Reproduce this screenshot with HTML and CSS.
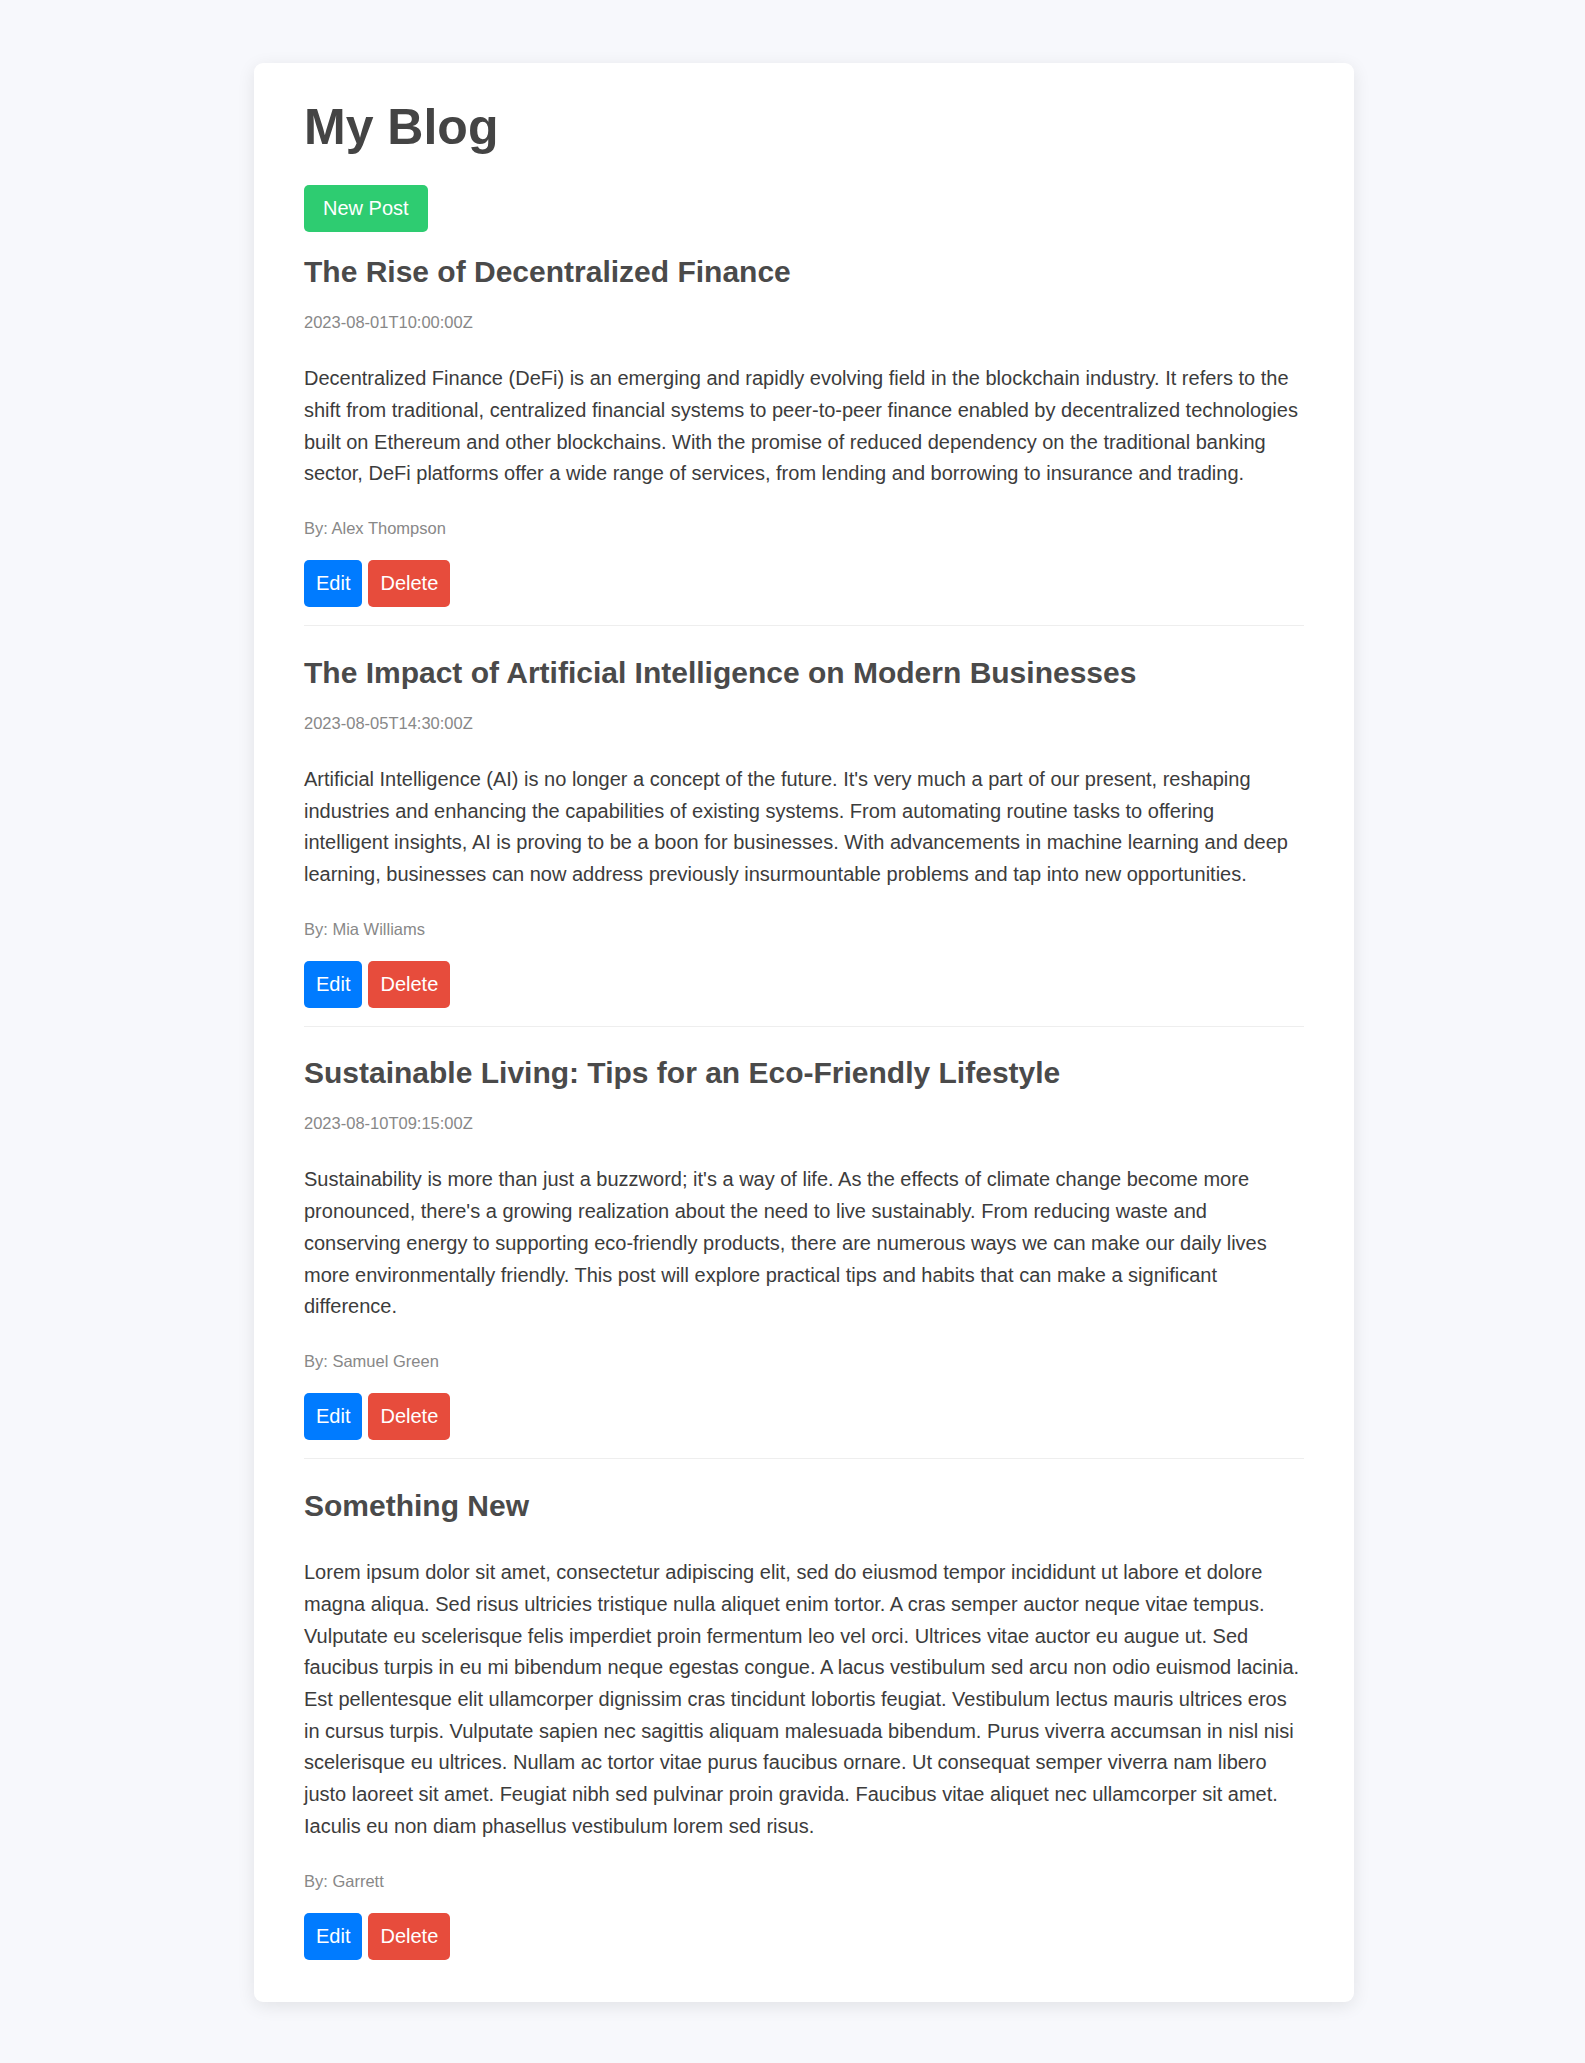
FILE: index.html
```html
<!DOCTYPE html>
<html lang="en">
<head>
<meta charset="utf-8">
<title>My Blog</title>
<link rel="stylesheet" href="styles.css">
</head>
<body>
<main class="card">
  <h1 class="page-title">My Blog</h1>
  <div class="toolbar">
    <button class="btn btn-new">New Post</button>
  </div>

  <article class="post">
    <h2 class="post-title">The Rise of Decentralized Finance</h2>
    <p class="post-date">2023-08-01T10:00:00Z</p>
    <p class="post-content">Decentralized Finance (DeFi) is an emerging and rapidly evolving field in the blockchain industry. It refers to the shift from traditional, centralized financial systems to peer-to-peer finance enabled by decentralized technologies built on Ethereum and other blockchains. With the promise of reduced dependency on the traditional banking sector, DeFi platforms offer a wide range of services, from lending and borrowing to insurance and trading.</p>
    <p class="post-author">By: Alex Thompson</p>
    <div class="post-actions">
      <button class="btn btn-edit">Edit</button>
      <button class="btn btn-delete">Delete</button>
    </div>
  </article>

  <article class="post">
    <h2 class="post-title">The Impact of Artificial Intelligence on Modern Businesses</h2>
    <p class="post-date">2023-08-05T14:30:00Z</p>
    <p class="post-content">Artificial Intelligence (AI) is no longer a concept of the future. It's very much a part of our present, reshaping industries and enhancing the capabilities of existing systems. From automating routine tasks to offering intelligent insights, AI is proving to be a boon for businesses. With advancements in machine learning and deep learning, businesses can now address previously insurmountable problems and tap into new opportunities.</p>
    <p class="post-author">By: Mia Williams</p>
    <div class="post-actions">
      <button class="btn btn-edit">Edit</button>
      <button class="btn btn-delete">Delete</button>
    </div>
  </article>

  <article class="post">
    <h2 class="post-title">Sustainable Living: Tips for an Eco-Friendly Lifestyle</h2>
    <p class="post-date">2023-08-10T09:15:00Z</p>
    <p class="post-content">Sustainability is more than just a buzzword; it's a way of life. As the effects of climate change become more pronounced, there's a growing realization about the need to live sustainably. From reducing waste and conserving energy to supporting eco-friendly products, there are numerous ways we can make our daily lives more environmentally friendly. This post will explore practical tips and habits that can make a significant difference.</p>
    <p class="post-author">By: Samuel Green</p>
    <div class="post-actions">
      <button class="btn btn-edit">Edit</button>
      <button class="btn btn-delete">Delete</button>
    </div>
  </article>

  <article class="post post-nodate">
    <h2 class="post-title">Something New</h2>
    <p class="post-content">Lorem ipsum dolor sit amet, consectetur adipiscing elit, sed do eiusmod tempor incididunt ut labore et dolore magna aliqua. Sed risus ultricies tristique nulla aliquet enim tortor. A cras semper auctor neque vitae tempus. Vulputate eu scelerisque felis imperdiet proin fermentum leo vel orci. Ultrices vitae auctor eu augue ut. Sed faucibus turpis in eu mi bibendum neque egestas congue. A lacus vestibulum sed arcu non odio euismod lacinia. Est pellentesque elit ullamcorper dignissim cras tincidunt lobortis feugiat. Vestibulum lectus mauris ultrices eros in cursus turpis. Vulputate sapien nec sagittis aliquam malesuada bibendum. Purus viverra accumsan in nisl nisi scelerisque eu ultrices. Nullam ac tortor vitae purus faucibus ornare. Ut consequat semper viverra nam libero justo laoreet sit amet. Feugiat nibh sed pulvinar proin gravida. Faucibus vitae aliquet nec ullamcorper sit amet. Iaculis eu non diam phasellus vestibulum lorem sed risus.</p>
    <p class="post-author">By: Garrett</p>
    <div class="post-actions">
      <button class="btn btn-edit">Edit</button>
      <button class="btn btn-delete">Delete</button>
    </div>
  </article>
</main>
</body>
</html>
```

FILE: styles.css
```css
html, body {
  margin: 0;
  padding: 0;
}

body {
  background: #f7f8fc;
  font-family: "Liberation Sans", Arial, Helvetica, sans-serif;
  color: #444;
  padding: 63px 0 62px 23px;
}

.card {
  display: block;
  width: 1100px;
  box-sizing: border-box;
  margin: 0 auto;
  background: #fff;
  border-radius: 9px;
  box-shadow: 0 4px 18px rgba(0, 0, 0, 0.09);
  padding: 34.4px 50px 24.4px;
}

.page-title {
  margin: 0 0 27.3px;
  font-size: 50px;
  line-height: 60px;
  font-weight: bold;
  color: #444;
}

.toolbar {
  display: flex;
}

.btn {
  font-family: "Liberation Sans", Arial, Helvetica, sans-serif;
  font-size: 20px;
  line-height: 23px;
  color: #fff;
  border: none;
  border-radius: 5px;
  padding: 12px;
  margin: 0;
  cursor: pointer;
}

.btn-new {
  background: #2ecc71;
  padding: 12px 19px;
}

.btn-edit {
  background: #007bff;
}

.btn-delete {
  background: #e74c3c;
}

.post {
  border-bottom: 1px solid #eeeeee;
  padding-bottom: 17.6px;
  margin-bottom: 28.9px;
}

.post:last-child {
  border-bottom: none;
  margin-bottom: 0;
}

.post-title {
  margin: 22.6px 0 22.8px;
  font-size: 30px;
  line-height: 36px;
  font-weight: bold;
  color: #4a4a4a;
}

.post-nodate .post-title {
  margin-bottom: 33.5px;
}

.post-date {
  margin: 0;
  font-size: 16.5px;
  line-height: 19px;
  color: #888;
}

.post-content {
  margin: 31.2px 0 29.4px;
  font-size: 20px;
  line-height: 31.7px;
  color: #3c3c3c;
}

.post-author {
  margin: 0 0 21.9px;
  font-size: 16.5px;
  line-height: 19px;
  color: #888;
}

.post-actions {
  display: flex;
  gap: 6px;
}
```
